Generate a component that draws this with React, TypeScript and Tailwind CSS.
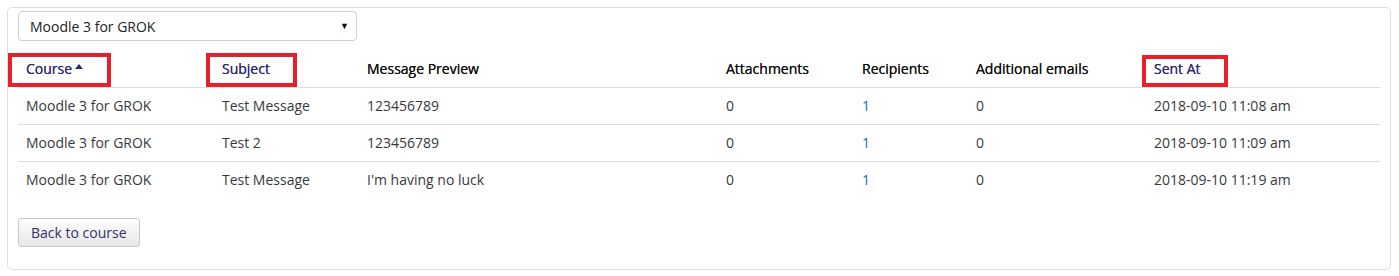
import React from 'react';

const rows = [
  { course: 'Moodle 3 for GROK', subject: 'Test Message', preview: '123456789', sent: '2018-09-10 11:08 am' },
  { course: 'Moodle 3 for GROK', subject: 'Test 2', preview: '123456789', sent: '2018-09-10 11:09 am' },
  { course: 'Moodle 3 for GROK', subject: 'Test Message', preview: "I'm having no luck", sent: '2018-09-10 11:19 am' },
];

function Highlight({ className }: { className: string }) {
  return <span className={`pointer-events-none absolute border-[4px] border-[#e8202a] ${className}`} />;
}

export default function App() {
  return (
    <div
      className="p-[7px] text-[14px] text-[#373a3c]"
      style={{ fontFamily: '"Open Sans", "Liberation Sans", sans-serif' }}
    >
      <div className="w-[1384px] h-[263px] rounded-[5px] border border-[#dedede] px-[10px] pt-[3px] bg-white">
        {/* course picker */}
        <div className="flex items-center justify-between w-[339px] h-[30px] rounded-[4px] border border-[#cfcfcf] pl-[11px] pr-[7px] text-[#222]">
          <span>Moodle 3 for GROK</span>
          <span className="text-[9px] text-black">▼</span>
        </div>

        <table className="mt-[10px] w-[1363px] table-fixed border-collapse">
          <colgroup>
            <col className="w-[196px]" />
            <col className="w-[145px]" />
            <col className="w-[359px]" />
            <col className="w-[136px]" />
            <col className="w-[114px]" />
            <col className="w-[178px]" />
            <col className="w-[235px]" />
          </colgroup>
          <thead>
            <tr className="border-b border-[#dedede] text-left">
              <th className="relative px-2 py-2 leading-[20px] font-normal text-[#2e2a6f] [text-shadow:0_0_0.3px_#2e2a6f]">
                <span className="inline-flex items-center gap-[3px]">
                  Course
                  <svg width="8" height="5" viewBox="0 0 8 5" className="mb-[6px]">
                    <path d="M0 5 L4 0 L8 5 Z" fill="#2e2a6f" />
                  </svg>
                </span>
                <Highlight className="left-[-10px] top-[2px] w-[103px] h-[34px]" />
              </th>
              <th className="relative px-2 py-2 leading-[20px] font-normal text-[#2e2a6f] [text-shadow:0_0_0.3px_#2e2a6f]">
                Subject
                <Highlight className="left-[-8px] top-[2px] w-[91px] h-[34px]" />
              </th>
              <th className="px-2 py-2 leading-[20px] font-normal text-[#111] [text-shadow:0_0_0.3px_#111]">Message Preview</th>
              <th className="px-2 py-2 leading-[20px] font-normal text-[#111] [text-shadow:0_0_0.3px_#111]">Attachments</th>
              <th className="px-2 py-2 leading-[20px] font-normal text-[#111] [text-shadow:0_0_0.3px_#111]">Recipients</th>
              <th className="px-2 py-2 leading-[20px] font-normal text-[#111] [text-shadow:0_0_0.3px_#111]">Additional emails</th>
              <th className="relative px-2 py-2 leading-[20px] font-normal text-[#2e2a6f] [text-shadow:0_0_0.3px_#2e2a6f]">
                Sent At
                <Highlight className="left-[-4px] top-[4px] w-[86px] h-[32px]" />
              </th>
            </tr>
          </thead>
          <tbody>
            {rows.map((r, i) => (
              <tr key={i} className={i > 0 ? 'border-t border-[#dedede]' : ''}>
                <td className="px-2 py-2 leading-[20px]">{r.course}</td>
                <td className="px-2 py-2 leading-[20px]">{r.subject}</td>
                <td className="px-2 py-2 leading-[20px]">{r.preview}</td>
                <td className="px-2 py-2 leading-[20px]">0</td>
                <td className="px-2 py-2 leading-[20px] text-[#0f6cbf]">1</td>
                <td className="px-2 py-2 leading-[20px]">0</td>
                <td className="px-2 py-2 leading-[20px]">{r.sent}</td>
              </tr>
            ))}
          </tbody>
        </table>

        <button className="mt-[20px] h-[29px] rounded-[3px] border border-[#c8c8c8] bg-gradient-to-b from-white to-[#e6e6e6] px-[12px] leading-[20px] text-[#35306e]">
          Back to course
        </button>
      </div>
    </div>
  );
}
